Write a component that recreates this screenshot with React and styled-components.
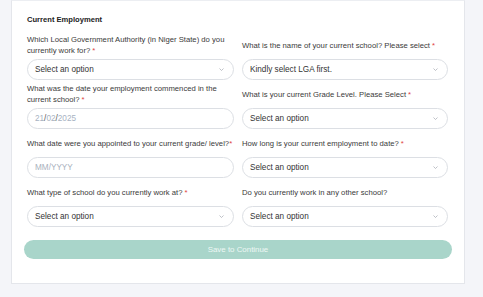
import styled, { createGlobalStyle } from 'styled-components';

const GlobalStyle = createGlobalStyle`
  body {
    margin: 0;
    background: #f4f5f9;
    font-family: "Liberation Sans", Arial, sans-serif;
  }
`;

const Card = styled.div`
  box-sizing: border-box;
  width: 454px;
  height: 284px;
  margin-left: 11px;
  background: #fff;
  border: 1px solid #e4e6eb;
  border-top-color: #eceef2;
  padding: 14px 16px 0 15px;
`;

const Title = styled.h3`
  margin: 0 0 9px;
  font-size: 7.6px;
  line-height: 10px;
  font-weight: 700;
  color: #222;
`;

const Grid = styled.div`
  display: grid;
  grid-template-columns: 207px 206px;
  column-gap: 8px;
  row-gap: 3px;
`;

const Field = styled.div`
  display: flex;
  flex-direction: column;
  gap: 3px;
`;

const Label = styled.label`
  min-height: 22px;
  display: flex;
  align-items: center;
  font-size: 7.7px;
  line-height: 11px;
  color: #3a3a3a;
  white-space: ${p => (p.$nowrap ? 'nowrap' : 'normal')};
`;

const Req = styled.span`
  color: #e0443e;
  margin-left: ${p => (p.$tight ? '0' : '2px')};
`;

const Box = styled.div`
  box-sizing: border-box;
  height: 21px;
  display: flex;
  align-items: center;
  justify-content: space-between;
  padding: 0 9px 0 7px;
  border: 1px solid #dcdfe4;
  border-radius: 11px;
  font-size: 8.2px;
  color: ${p => (p.$muted ? '#a9b1bd' : '#333')};
`;

const Slash = styled.span`
  color: #555;
`;

const Digits = styled.span`
  color: #a7b2c2;
`;

const Button = styled.button`
  display: block;
  width: 428px;
  height: 19px;
  margin: 13px 0 0 -3px;
  border: none;
  border-radius: 10px;
  background: #a9d5ca;
  color: #eef8f5;
  font-family: inherit;
  font-size: 7.9px;
  font-weight: 500;
`;

function Chevron() {
  return (
    <svg width="5" height="3" viewBox="0 0 5 3" fill="none">
      <path d="M0.5 0.5 L2.5 2.5 L4.5 0.5" stroke="#a3a8b0" strokeWidth="0.7" />
    </svg>
  );
}

function Select({ text }) {
  return (
    <Box>
      <span>{text}</span>
      <Chevron />
    </Box>
  );
}

function Q({ children, req, tight }) {
  return (
    <Label $nowrap={tight}>
      <span>
        {children}
        {req && <Req $tight={tight}>*</Req>}
      </span>
    </Label>
  );
}

export default function App() {
  return (
    <>
      <GlobalStyle />
      <Card>
        <Title>Current Employment</Title>
        <Grid>
          <Field>
            <Q req>Which Local Government Authority (in Niger State) do you currently work for?</Q>
            <Select text="Select an option" />
          </Field>
          <Field>
            <Q req>What is the name of your current school? Please select</Q>
            <Select text="Kindly select LGA first." />
          </Field>
          <Field>
            <Q req>What was the date your employment commenced in the current school?</Q>
            <Box>
              <span>
                <Digits>21</Digits><Slash>/</Slash><Digits>02</Digits><Slash>/</Slash><Digits>2025</Digits>
              </span>
            </Box>
          </Field>
          <Field>
            <Q req>What is your current Grade Level. Please Select</Q>
            <Select text="Select an option" />
          </Field>
          <Field>
            <Q req tight>What date were you appointed to your current grade/ level?</Q>
            <Box $muted>MM/YYYY</Box>
          </Field>
          <Field>
            <Q req>How long is your current employment to date?</Q>
            <Select text="Select an option" />
          </Field>
          <Field>
            <Q req>What type of school do you currently work at?</Q>
            <Select text="Select an option" />
          </Field>
          <Field>
            <Q>Do you currently work in any other school?</Q>
            <Select text="Select an option" />
          </Field>
        </Grid>
        <Button>Save to Continue</Button>
      </Card>
    </>
  );
}
